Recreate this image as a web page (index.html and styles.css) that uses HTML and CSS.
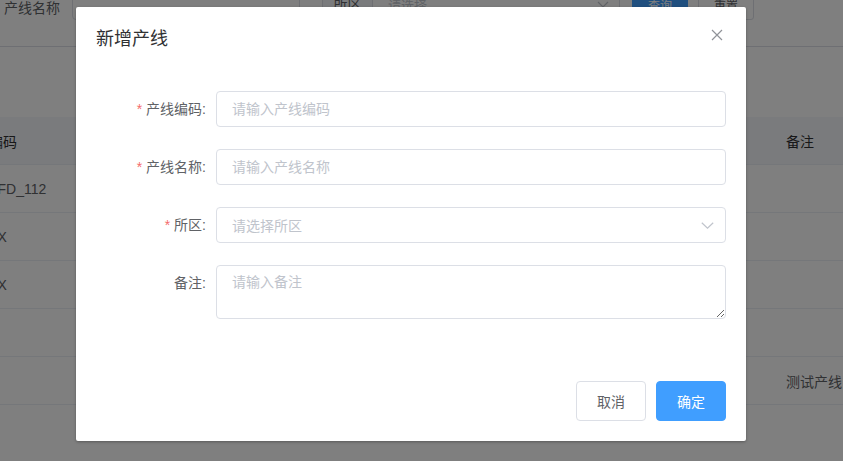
FILE: index.html
```html
<!DOCTYPE html>
<html lang="zh-CN">
<head>
<meta charset="utf-8">
<title>新增产线</title>
<link rel="stylesheet" href="styles.css">
</head>
<body>
<div class="page">
  <div class="search">
    <span class="s-label">产线名称</span>
    <div class="s-input"></div>
    <div class="s-group">
      <span class="s-prepend">所区</span>
      <div class="s-select"><span>请选择</span>
        <svg class="s-arrow" width="12" height="7" viewBox="0 0 12 7"><polyline points="1,1 6,6 11,1" fill="none" stroke="#c0c4cc" stroke-width="1.2"/></svg>
      </div>
    </div>
    <button class="s-btn s-btn-primary">查询</button>
    <button class="s-btn">重置</button>
  </div>
  <div class="divider"></div>
  <div class="grid">
    <div class="g-row g-head">
      <div class="c-code">产线编码</div>
      <div class="c-mid"></div>
      <div class="c-note">备注</div>
    </div>
    <div class="g-row">
      <div class="c-code">SCX_FD_112</div>
      <div class="c-mid"></div>
      <div class="c-note"></div>
    </div>
    <div class="g-row">
      <div class="c-code">SCX_X</div>
      <div class="c-mid"></div>
      <div class="c-note"></div>
    </div>
    <div class="g-row">
      <div class="c-code">SCX_X</div>
      <div class="c-mid"></div>
      <div class="c-note"></div>
    </div>
    <div class="g-row">
      <div class="c-code"></div>
      <div class="c-mid"></div>
      <div class="c-note"></div>
    </div>
    <div class="g-row">
      <div class="c-code"></div>
      <div class="c-mid"></div>
      <div class="c-note">测试产线</div>
    </div>
  </div>
</div>

<div class="mask"></div>

<div class="dialog">
  <div class="d-header">
    <span class="d-title">新增产线</span>
    <button class="d-close" aria-label="关闭">
      <svg width="12" height="12" viewBox="0 0 12 12"><path d="M1 1 L11 11 M11 1 L1 11" stroke="#909399" stroke-width="1.2" fill="none"/></svg>
    </button>
  </div>
  <div class="d-body">
    <div class="f-item">
      <label class="f-label"><span class="req">*</span>产线编码:</label>
      <input class="f-input" type="text" placeholder="请输入产线编码">
    </div>
    <div class="f-item">
      <label class="f-label"><span class="req">*</span>产线名称:</label>
      <input class="f-input" type="text" placeholder="请输入产线名称">
    </div>
    <div class="f-item">
      <label class="f-label"><span class="req">*</span>所区:</label>
      <div class="f-select">
        <span class="f-ph">请选择所区</span>
        <svg class="f-arrow" width="13" height="7" viewBox="0 0 13 7"><polyline points="0.8,0.8 6.5,6.2 12.2,0.8" fill="none" stroke="#c0c4cc" stroke-width="1.2"/></svg>
      </div>
    </div>
    <div class="f-item">
      <label class="f-label">备注:</label>
      <textarea class="f-textarea" placeholder="请输入备注"></textarea>
    </div>
  </div>
  <div class="d-footer">
    <button class="btn">取消</button>
    <button class="btn btn-primary">确定</button>
  </div>
</div>
</body>
</html>
```

FILE: styles.css
```css
html, body {
  margin: 0;
  padding: 0;
  width: 843px;
  height: 461px;
  overflow: hidden;
  background: #fff;
  font-family: "Liberation Sans", "Noto Sans CJK SC", sans-serif;
  font-size: 14px;
  color: #606266;
}

.page {
  position: relative;
  width: 843px;
  height: 461px;
  overflow: hidden;
}

/* search bar (scrolled partly out of view) */
.search {
  display: flex;
  align-items: flex-start;
  height: 32px;
  margin-top: -12px;
}
.s-label {
  margin-left: 4px;
  width: 56px;
  padding-top: 12px;
  line-height: 16px;
  color: #606266;
  white-space: nowrap;
}
.s-input {
  margin-left: 12px;
  width: 228px;
  height: 32px;
  box-sizing: border-box;
  border: 1px solid #dcdfe6;
  border-radius: 4px;
}
.s-group {
  margin-left: 22px;
  display: flex;
  height: 32px;
}
.s-prepend {
  width: 50px;
  box-sizing: border-box;
  border: 1px solid #dcdfe6;
  border-right: none;
  border-radius: 4px 0 0 4px;
  background: #f5f7fa;
  color: #606266;
  text-align: center;
  line-height: 30px;
}
.s-select {
  width: 248px;
  box-sizing: border-box;
  border: 1px solid #dcdfe6;
  border-radius: 0 4px 4px 0;
  padding: 0 10px 0 15px;
  display: flex;
  align-items: center;
  justify-content: space-between;
  color: #c0c4cc;
  font-size: 13px;
}
.s-btn {
  margin-left: 10px;
  width: 56px;
  height: 32px;
  box-sizing: border-box;
  border: 1px solid #dcdfe6;
  border-radius: 3px;
  background: #fff;
  color: #606266;
  font-family: inherit;
  font-size: 12px;
  padding: 0;
}
.s-btn-primary {
  margin-left: 12px;
  background: #409eff;
  border-color: #409eff;
  color: #fff;
}

.divider {
  margin-top: 26px;
  height: 1px;
  background: #dcdfe6;
}

/* table */
.grid {
  margin-top: 70px;
  margin-left: -50px;
  width: 960px;
}
.g-row {
  display: flex;
  align-items: center;
  height: 48px;
  box-sizing: border-box;
  border-bottom: 1px solid #ebeef5;
  color: #606266;
  white-space: nowrap;
}
.g-head {
  background: #f5f7fa;
  color: #303133;
}
.c-code {
  width: 200px;
  padding-left: 11px;
  box-sizing: border-box;
}
.c-mid {
  flex: 1;
}
.c-note {
  width: 134px;
  padding-left: 10px;
  box-sizing: border-box;
}

/* overlay */
.mask {
  position: absolute;
  left: 0;
  top: 0;
  width: 843px;
  height: 461px;
  background: rgba(0, 0, 0, 0.5);
}

/* dialog */
.dialog {
  position: absolute;
  left: 76px;
  top: 7px;
  width: 670px;
  background: #fff;
  border-radius: 2px;
  box-shadow: 0 1px 3px rgba(0, 0, 0, 0.3);
}
.d-header {
  position: relative;
  padding: 20px 20px 10px;
}
.d-title {
  display: block;
  font-size: 18px;
  line-height: 24px;
  color: #303133;
}
.d-close {
  position: absolute;
  top: 22px;
  right: 23px;
  width: 12px;
  height: 12px;
  padding: 0;
  border: none;
  background: transparent;
  display: flex;
}
.d-body {
  padding: 30px 20px;
}
.f-item {
  display: flex;
  margin-bottom: 22px;
}
.f-label {
  width: 120px;
  flex: none;
  box-sizing: border-box;
  padding-right: 10px;
  text-align: right;
  line-height: 36px;
  font-size: 14px;
  color: #606266;
}
.req {
  color: #f56c6c;
  margin-right: 4px;
}
.f-input {
  flex: 1;
  height: 36px;
  box-sizing: border-box;
  border: 1px solid #dcdfe6;
  border-radius: 4px;
  padding: 0 15px;
  font-family: inherit;
  font-size: 14px;
  color: #606266;
  outline: none;
  margin: 0;
}
.f-input::placeholder,
.f-textarea::placeholder {
  color: #c0c4cc;
}
.f-select {
  flex: 1;
  height: 36px;
  box-sizing: border-box;
  border: 1px solid #dcdfe6;
  border-radius: 4px;
  padding: 0 11px 0 15px;
  display: flex;
  align-items: center;
  justify-content: space-between;
}
.f-ph {
  color: #c0c4cc;
}
.f-textarea {
  flex: 1;
  height: 54px;
  box-sizing: border-box;
  border: 1px solid #dcdfe6;
  border-radius: 4px;
  padding: 6px 15px 4px;
  font-family: inherit;
  font-size: 14px;
  line-height: 1.5;
  color: #606266;
  resize: vertical;
  outline: none;
  margin: 0;
}
.d-footer {
  display: flex;
  justify-content: flex-end;
  gap: 10px;
  padding: 10px 20px 20px;
}
.btn {
  width: 70px;
  height: 40px;
  box-sizing: border-box;
  border: 1px solid #dcdfe6;
  border-radius: 4px;
  background: #fff;
  color: #606266;
  font-family: inherit;
  font-size: 14px;
  padding: 0;
}
.btn-primary {
  background: #409eff;
  border-color: #409eff;
  color: #fff;
}
```
